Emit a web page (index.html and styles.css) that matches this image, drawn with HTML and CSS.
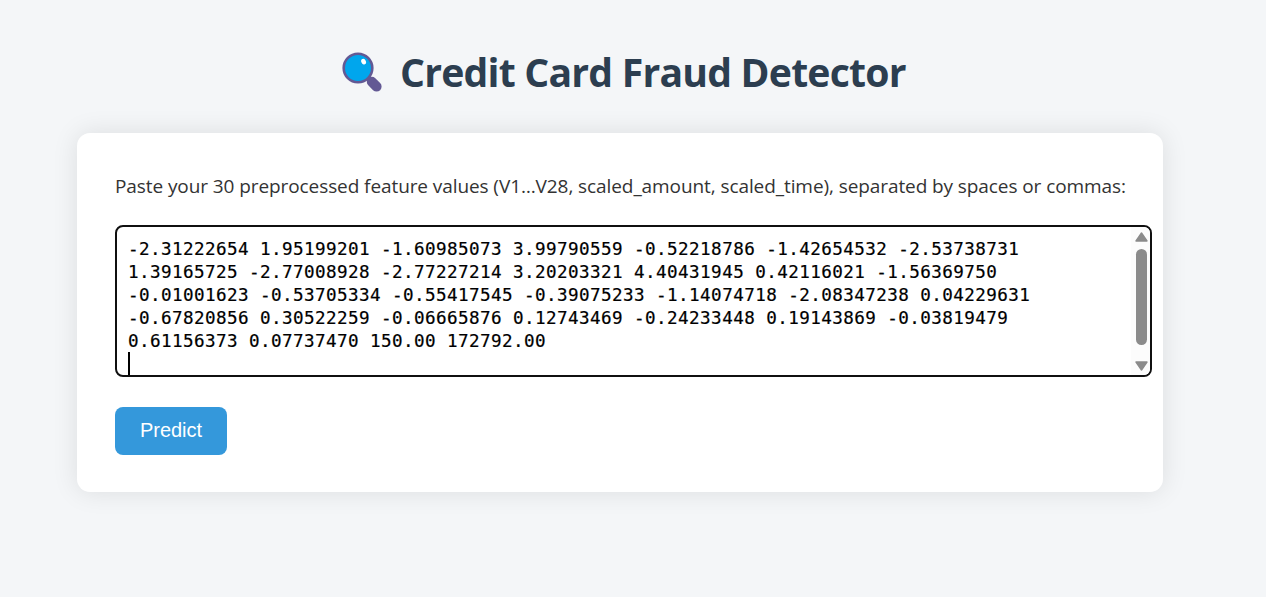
FILE: index.html
```
<!DOCTYPE html>
<html lang="en">
<head>
<meta charset="utf-8">
<title>Credit Card Fraud Detector</title>
<link rel="stylesheet" href="styles.css">
</head>
<body>
<h1 class="title">
  <svg class="title-icon" viewBox="0 0 42 42" aria-hidden="true">
    <path d="M27 27L30 30" stroke="#635994" stroke-width="5"/>
    <path d="M30.8 30.8L35.6 35.6" stroke="#635994" stroke-width="10" stroke-linecap="round"/>
    <circle cx="17" cy="17" r="14.3" fill="#00a6ed" stroke="#635994" stroke-width="2.6"/>
    <ellipse cx="22.6" cy="10.6" rx="2.3" ry="2.9" fill="#fff" transform="rotate(-25 22.6 10.6)"/>
  </svg>
  <span class="title-text">Credit Card Fraud Detector</span>
</h1>
<main class="card">
  <p class="label"><span class="label-text">Paste your 30 preprocessed feature values (V1…V28, scaled_amount, scaled_time), separated by spaces or commas:</span></p>
  <div class="field">
    <div class="values" role="textbox" aria-multiline="true">-2.31222654 1.95199201 -1.60985073 3.99790559 -0.52218786 -1.42654532 -2.53738731
1.39165725 -2.77008928 -2.77227214 3.20203321 4.40431945 0.42116021 -1.56369750
-0.01001623 -0.53705334 -0.55417545 -0.39075233 -1.14074718 -2.08347238 0.04229631
-0.67820856 0.30522259 -0.06665876 0.12743469 -0.24233448 0.19143869 -0.03819479
0.61156373 0.07737470 150.00 172792.00
<span class="caret"></span></div>
    <div class="scrollbar">
      <svg class="arrow" viewBox="0 0 13 10"><path d="M6.5 1L12 9H1Z" fill="#8b8b8b" stroke="#8b8b8b" stroke-width="1.4" stroke-linejoin="round"/></svg>
      <div class="thumb"></div>
      <svg class="arrow arrow-down" viewBox="0 0 13 10"><path d="M6.5 9L12 1H1Z" fill="#8b8b8b" stroke="#8b8b8b" stroke-width="1.4" stroke-linejoin="round"/></svg>
    </div>
  </div>
  <button class="predict" type="button">Predict</button>
</main>
</body>
</html>
```
FILE: styles.css
```
* { box-sizing: border-box; }
body {
  margin: 0;
  min-height: 597px;
  padding: 45px 103px 0 77px;
  background: #f4f6f8;
  font-family: "Open Sans", "Noto Sans", sans-serif;
  overflow: hidden;
}
.title {
  display: flex;
  align-items: center;
  height: 54px;
  margin: 0 0 34px;
  padding-left: 264px;
  color: #2c3e50;
  font-size: 39.2px;
  font-weight: 700;
  line-height: 54px;
  white-space: nowrap;
}
.title-icon { width: 42px; height: 42px; margin-right: 17px; }
.title-text { padding-bottom: 1px; letter-spacing: -0.8px; }
.card {
  height: 359px;
  padding: 38px;
  background: #fff;
  border-radius: 13px;
  box-shadow: 0 0 26px rgba(0, 0, 0, 0.1);
}
.label {
  margin: 0 0 24px;
  padding-top: 1px;
  color: #333;
  font-size: 19px;
  line-height: 29px;
  white-space: nowrap;
}
.label-text { letter-spacing: -0.085px; }
.field {
  display: flex;
  width: 1037px;
  height: 152px;
  border: 2px solid #101010;
  border-radius: 8px;
  background: #fff;
  overflow: hidden;
}
.values {
  flex: 1;
  padding: 11px 0 0 11px;
  color: #000;
  font-family: "DejaVu Sans Mono", monospace;
  font-size: 17.6px;
  line-height: 23px;
  letter-spacing: 0.41px;
  white-space: pre;
  -webkit-text-stroke: 0.2px #000;
}
.caret {
  display: block;
  width: 2px;
  height: 24px;
  margin-top: -1px;
  background: #000;
}
.scrollbar {
  display: flex;
  flex-direction: column;
  align-items: center;
  width: 19px;
  padding: 5px 0 4px 2px;
  background: #fcfcfc;
}
.arrow { width: 13px; height: 10px; }
.thumb {
  width: 11px;
  height: 96px;
  margin-top: 7px;
  border-radius: 6px;
  background: #8b8b8b;
}
.arrow-down { margin-top: auto; }
.predict {
  display: block;
  width: 112px;
  height: 48px;
  margin-top: 30px;
  padding: 0 0 2px;
  border: 0;
  border-radius: 8px;
  background: #3498db;
  color: #fff;
  font-family: "Liberation Sans", Arial, sans-serif;
  font-size: 20px;
}
```
